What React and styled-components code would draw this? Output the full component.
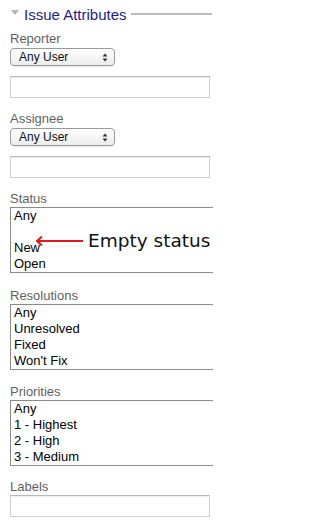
import React from "react";
import styled, { createGlobalStyle } from "styled-components";

const GlobalStyle = createGlobalStyle`
  html, body {
    margin: 0;
    padding: 0;
    background: #ffffff;
  }
  body {
    font-family: Arial, "Liberation Sans", Helvetica, sans-serif;
  }
`;

const Panel = styled.div`
  width: 202px;
  padding-left: 10px;
`;

const Legend = styled.div`
  display: flex;
  align-items: center;
  height: 30px;
  margin: -1px 0 2px;
`;

const Caret = styled.span`
  width: 0;
  height: 0;
  border-left: 4px solid transparent;
  border-right: 4px solid transparent;
  border-top: 5px solid #b4b4b4;
  margin: 0 5px 0 1px;
  position: relative;
  top: -2px;
`;

const LegendText = styled.span`
  font-size: 15px;
  color: #1c1c8e;
  white-space: nowrap;
`;

const Rule = styled.span`
  flex: 1;
  height: 2px;
  background: #bcbcbc;
  margin-left: 4px;
`;

const Group = styled.div`
  display: flex;
  flex-direction: column;
  align-items: flex-start;
  margin-top: ${(p) => p.$top || 0}px;
`;

const Label = styled.div`
  font-size: 13px;
  line-height: 15px;
  color: #5f5f5f;
  margin-bottom: ${(p) => p.$gap ?? 1}px;
`;

const SelectBox = styled.div`
  box-sizing: border-box;
  width: 105px;
  height: 18px;
  display: flex;
  align-items: center;
  justify-content: space-between;
  padding: 0 6px 0 8px;
  border: 1px solid #9a9a9a;
  border-radius: 4px;
  background: linear-gradient(#ffffff, #ececec);
  box-shadow: 0 1px 0 rgba(0, 0, 0, 0.08);
  font-size: 12px;
  color: #111;
`;

const TextInput = styled.div`
  box-sizing: border-box;
  width: 200px;
  height: 22px;
  margin-top: ${(p) => p.$top ?? 10}px;
  border: 1px solid #d0d0d0;
  border-top-color: #b8b8b8;
  box-shadow: inset 0 1px 1px rgba(0, 0, 0, 0.08);
  background: #fff;
`;

const ListBox = styled.div`
  position: relative;
  width: 202px;
  border-top: 1px solid #8a8a8a;
  border-bottom: 1px solid #8a8a8a;
  border-left: 1px solid #8a8a8a;
`;

const Option = styled.div`
  height: 16px;
  line-height: 16px;
  padding-left: 3px;
  font-size: 13px;
  color: #000;
  white-space: nowrap;
`;

const Note = styled.div`
  position: absolute;
  left: 24px;
  top: 22px;
  display: flex;
  align-items: center;
  gap: 5px;
`;

const NoteText = styled.span`
  font-family: "DejaVu Sans", Verdana, sans-serif;
  font-size: 18.5px;
  color: #111;
  white-space: nowrap;
`;

const Updown = () => (
  <svg width="6" height="9" viewBox="0 0 6 9">
    <path d="M3 0.5 L5.5 3.5 L0.5 3.5 Z" fill="#333" />
    <path d="M3 8.5 L5.5 5.5 L0.5 5.5 Z" fill="#333" />
  </svg>
);

const RedArrow = () => (
  <svg width="48" height="12" viewBox="0 0 48 12">
    <line x1="2" y1="6" x2="48" y2="6" stroke="#e41818" strokeWidth="2" />
    <path d="M7 1.5 L2 6 L7 10.5" fill="none" stroke="#e41818" strokeWidth="2" />
  </svg>
);

const UserField = ({ label, top }) => (
  <Group $top={top}>
    <Label $gap={2}>{label}</Label>
    <SelectBox>
      <span>Any User</span>
      <Updown />
    </SelectBox>
    <TextInput />
  </Group>
);

const ListField = ({ label, top, options, children }) => (
  <Group $top={top}>
    <Label>{label}</Label>
    <ListBox>
      {options.map((o, i) => (
        <Option key={i}>{o || "\u00a0"}</Option>
      ))}
      {children}
    </ListBox>
  </Group>
);

export default function App() {
  return (
    <>
      <GlobalStyle />
      <Panel>
        <Legend>
          <Caret />
          <LegendText>Issue Attributes</LegendText>
          <Rule />
        </Legend>

        <UserField label="Reporter" top={0} />
        <UserField label="Assignee" top={13} />

        <ListField label="Status" top={13} options={["Any", "", "New", "Open"]}>
          <Note>
            <RedArrow />
            <NoteText>Empty status</NoteText>
          </Note>
        </ListField>

        <ListField
          label="Resolutions"
          top={15}
          options={["Any", "Unresolved", "Fixed", "Won't Fix"]}
        />

        <ListField
          label="Priorities"
          top={14}
          options={["Any", "1 - Highest", "2 - High", "3 - Medium"]}
        />

        <Group $top={13}>
          <Label>Labels</Label>
          <TextInput $top={0} />
        </Group>
      </Panel>
    </>
  );
}
